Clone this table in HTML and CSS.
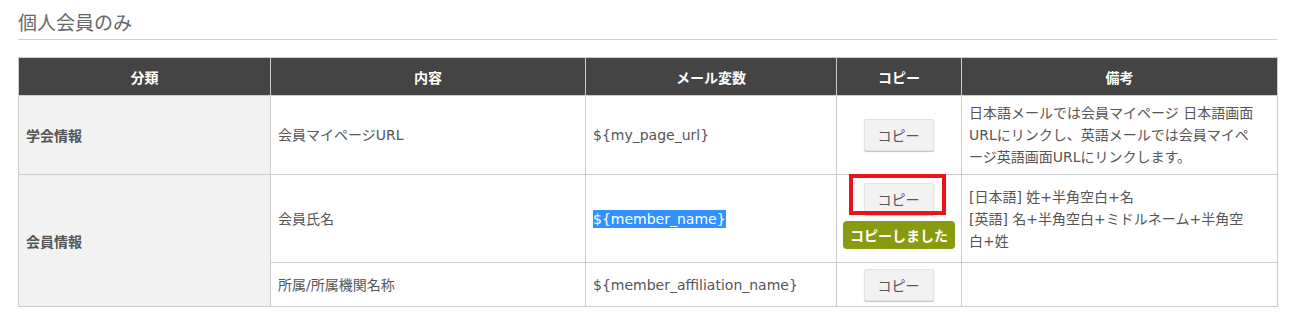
FILE: index.html
```html
<!DOCTYPE html>
<html lang="ja">
<head>
<meta charset="utf-8">
<link rel="stylesheet" href="styles.css">
</head>
<body>
<div class="page">
  <h2 class="title">個人会員のみ</h2>
  <table class="vars">
    <colgroup>
      <col class="c1"><col class="c2"><col class="c3"><col class="c4"><col class="c5">
    </colgroup>
    <thead>
      <tr><th>分類</th><th>内容</th><th>メール変数</th><th>コピー</th><th>備考</th></tr>
    </thead>
    <tbody>
      <tr class="r1">
        <td class="cat">学会情報</td>
        <td>会員マイページURL</td>
        <td>${my_page_url}</td>
        <td class="copy"><button class="btn">コピー</button></td>
        <td>日本語メールでは会員マイページ 日本語画面<br>URLにリンクし、英語メールでは会員マイペ<br>ージ英語画面URLにリンクします。</td>
      </tr>
      <tr class="r2">
        <td class="cat" rowspan="2">会員情報</td>
        <td>会員氏名</td>
        <td><span class="sel">${member_name}</span></td>
        <td class="copy">
          <div class="copybox">
            <button class="btn">コピー</button>
            <span class="mark"></span>
          </div>
          <div class="badge">コピーしました</div>
        </td>
        <td>[日本語] 姓+半角空白+名<br>[英語] 名+半角空白+ミドルネーム+半角空<br>白+姓</td>
      </tr>
      <tr class="r3">
        <td>所属/所属機関名称</td>
        <td>${member_affiliation_name}</td>
        <td class="copy"><button class="btn">コピー</button></td>
        <td></td>
      </tr>
    </tbody>
  </table>
</div>
</body>
</html>
```

FILE: styles.css
```css
html, body {
  margin: 0;
  padding: 0;
  background: #fff;
}
body {
  font-family: "DejaVu Sans", "Noto Sans CJK JP", sans-serif;
  font-size: 14px;
  color: #555;
}
.page {
  padding: 8px 17px 0 18px;
}
.title {
  margin: 0;
  font-family: "Noto Sans CJK JP", sans-serif;
  font-size: 19px;
  font-weight: normal;
  line-height: 28px;
  color: #666;
  padding-bottom: 3px;
  border-bottom: 1px solid #d0d0d0;
}
.vars {
  margin-top: 17px;
  width: 1259px;
  table-layout: fixed;
  border-collapse: collapse;
  border: 1px solid #ccc;
}
.c1 { width: 252px; }
.c2 { width: 315px; }
.c3 { width: 251px; }
.c4 { width: 125px; }
.c5 { width: 316px; }
.vars th {
  background: #444;
  color: #fff;
  font-family: "Noto Sans CJK JP", sans-serif;
  font-weight: bold;
  font-size: 14px;
  height: 37px;
  padding: 0 8px;
  border: 1px solid #ccc;
  border-top: none;
  border-bottom: none;
}
.vars td {
  border: 1px solid #ccc;
  padding: 5px 8px 5px 7px;
  line-height: 22px;
  vertical-align: middle;
  white-space: nowrap;
}
.vars td.cat {
  background: #f2f2f2;
  font-weight: bold;
  font-family: "Noto Sans CJK JP", sans-serif;
}
.r1 td { height: 68px; }
.r2 td { height: 77px; }
.r3 td { height: 33px; }
.copy {
  text-align: center;
}
.btn {
  font-family: "Noto Sans CJK JP", sans-serif;
  font-size: 14px;
  color: #555;
  width: 70px;
  height: 32px;
  background: #f2f2f2;
  border: 1px solid #e2e2e2;
  border-radius: 2px;
  box-shadow: 0 1px 1px rgba(0,0,0,0.25);
  padding: 0;
  cursor: pointer;
}
.copybox {
  position: relative;
  display: inline-block;
  vertical-align: top;
  margin-top: 2px;
}
.copybox .btn { display: block; }
.mark {
  position: absolute;
  left: -15px;
  top: -9px;
  width: 89px;
  height: 33px;
  border: 4px solid #e8141c;
}
.badge {
  display: block;
  width: 112px;
  height: 28px;
  margin: 6px auto 7px -1px;
  background: #8a9a0e;
  color: #fff;
  font-family: "Noto Sans CJK JP", sans-serif;
  font-weight: bold;
  font-size: 14px;
  line-height: 28px;
  border-radius: 4px;
  text-align: center;
}
.sel {
  background: #3390ff;
  color: #fff;
  padding: 1px 0;
}
```
